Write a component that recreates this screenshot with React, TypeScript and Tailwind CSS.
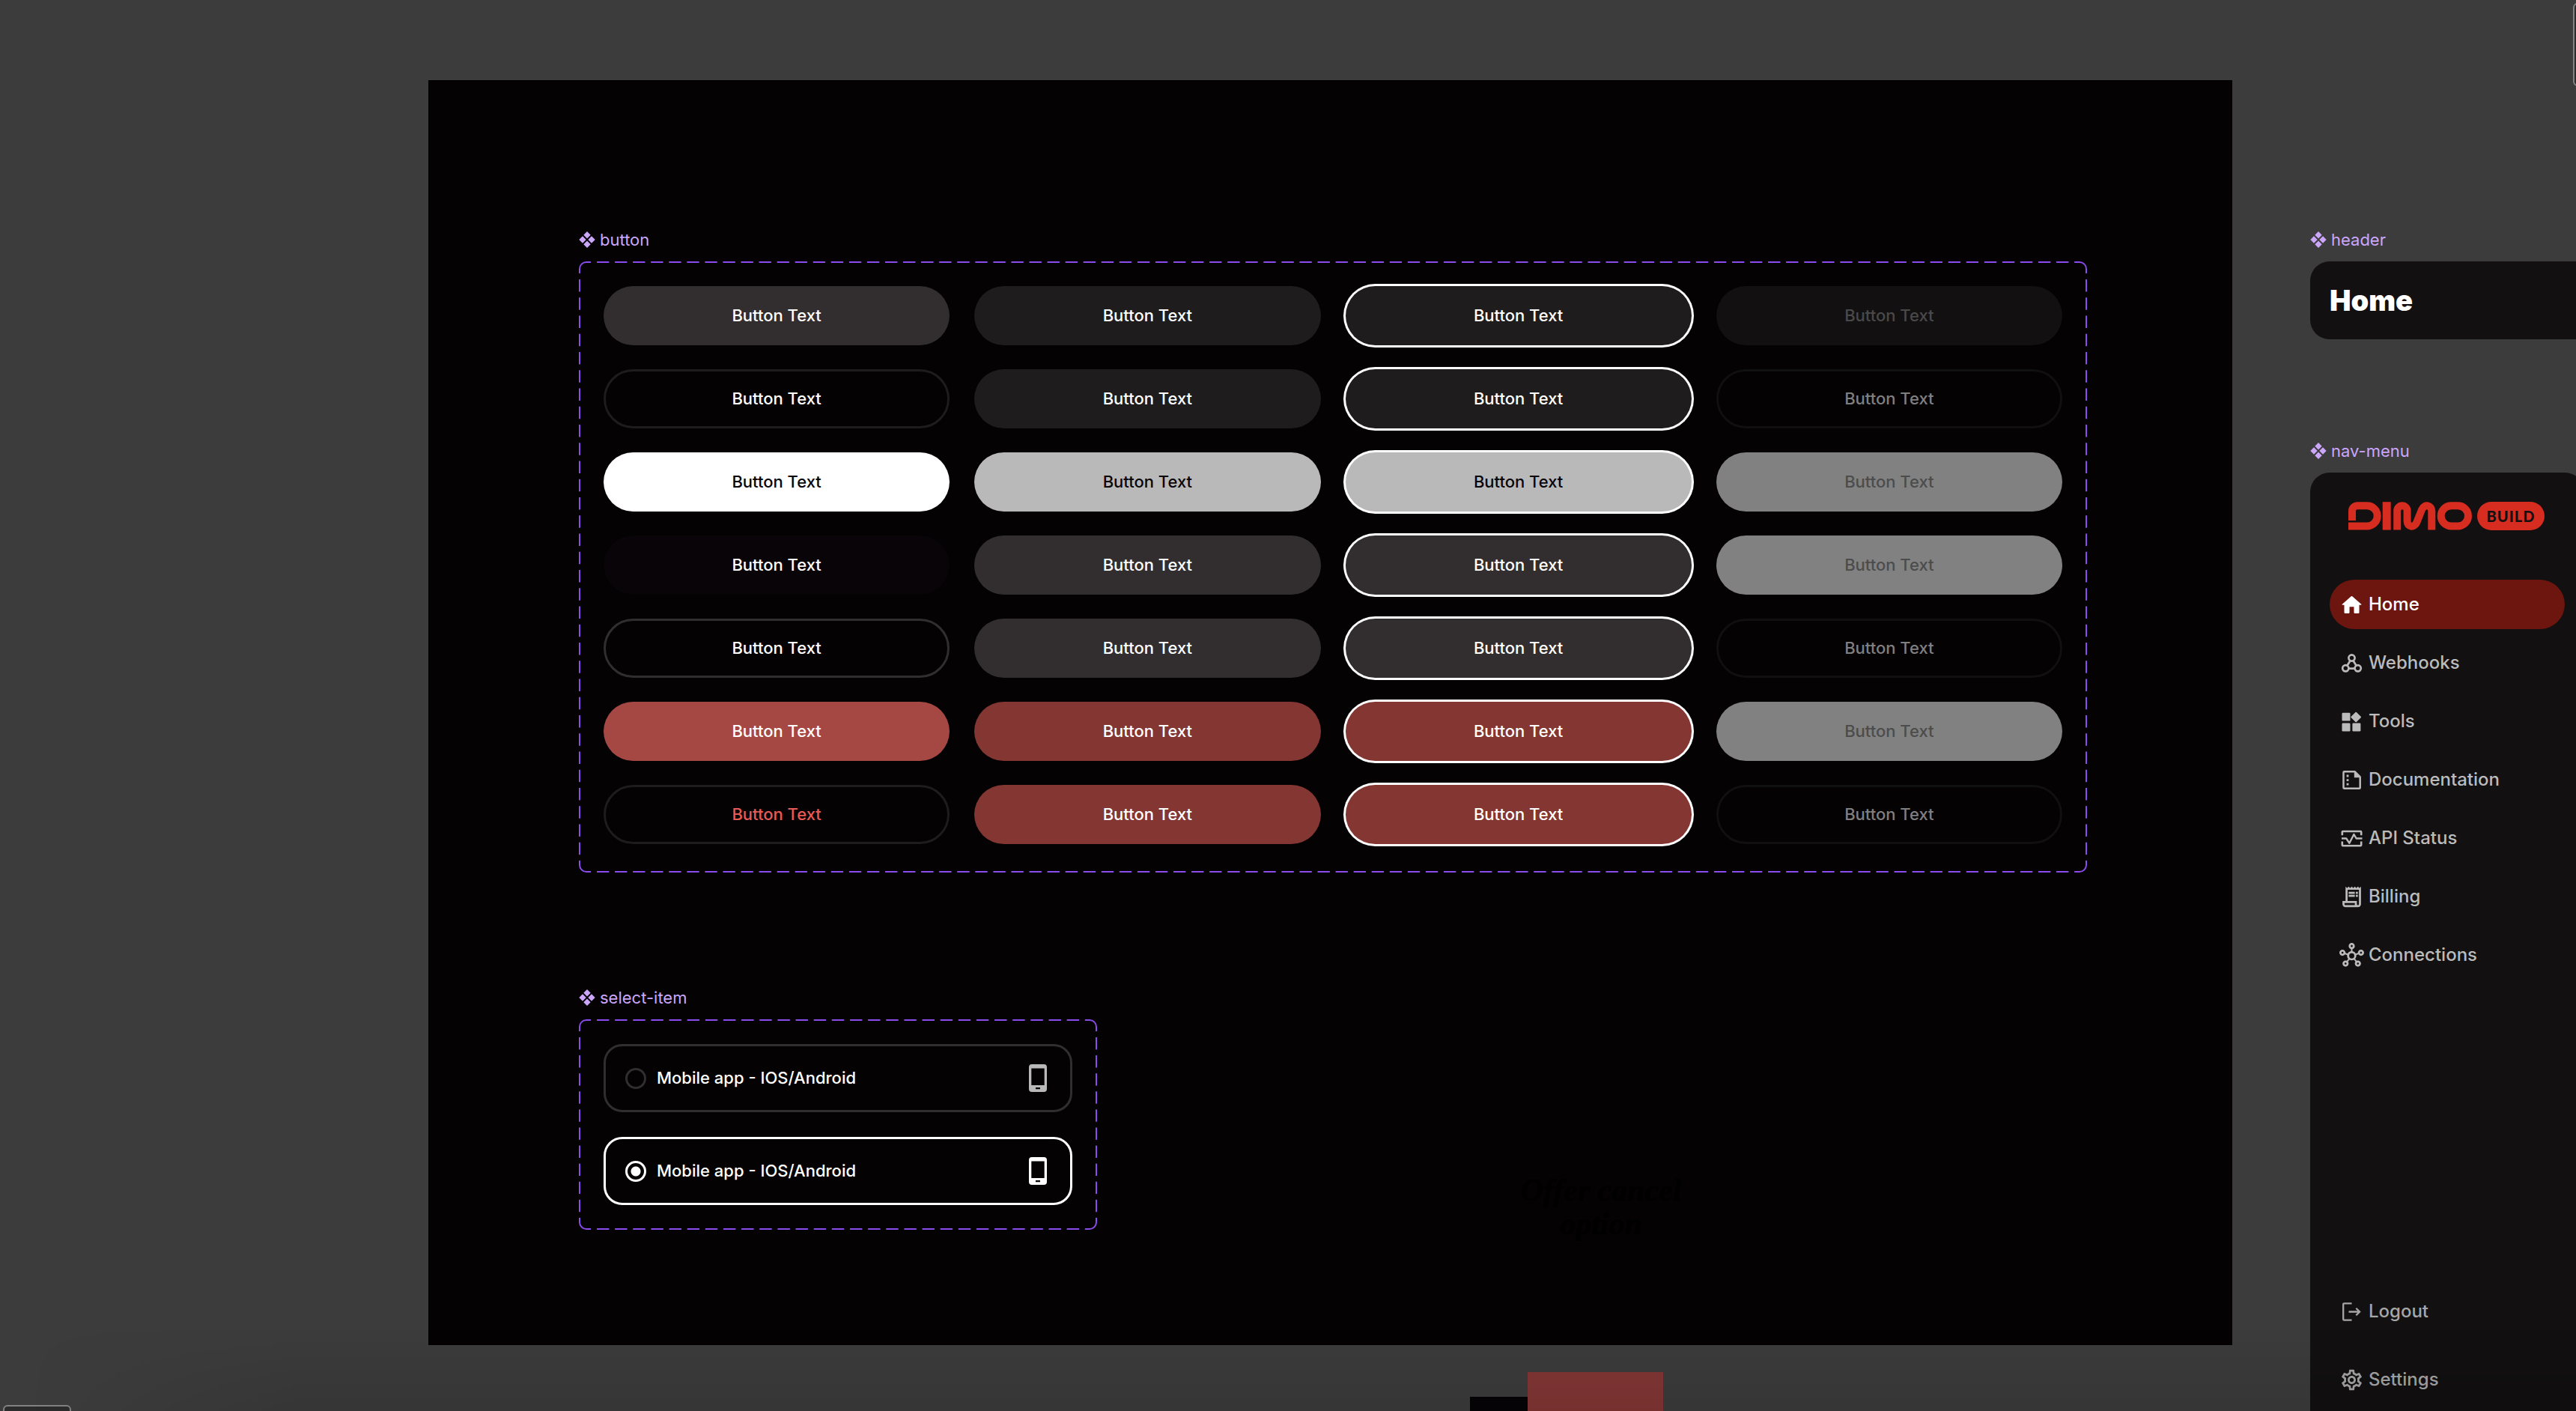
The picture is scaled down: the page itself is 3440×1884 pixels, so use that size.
import React, { useState } from "react";
import { clsx } from "clsx";
import { MdOutlineHub, MdOutlineReceiptLong, MdOutlineSettings } from "react-icons/md";

const disabledSolid = "bg-[#818181] text-[#4c4c4c]";
const disabledOutline = "border-3 border-[#111011] text-[#807f80]";

// one entry per variant: default, hover, focus, disabled
const buttonRows = [
  [
    "bg-[#322e2f] text-white",
    "bg-[#1e1c1d] text-white",
    "bg-[#1e1c1d] text-white",
    "bg-[#121011] text-[#4a4949]",
  ],
  [
    "border-3 border-[#1e1c1d] text-white",
    "bg-[#1e1c1d] text-white",
    "bg-[#1e1c1d] text-white",
    disabledOutline,
  ],
  [
    "bg-white text-[#080408]",
    "bg-[#b9b9b9] text-[#080408]",
    "bg-[#b9b9b9] text-[#080408]",
    disabledSolid,
  ],
  [
    "bg-[#080407] text-white",
    "bg-[#322e2f] text-white",
    "bg-[#322e2f] text-white",
    disabledSolid,
  ],
  [
    "border-3 border-[#322e2f] text-white",
    "bg-[#322e2f] text-white",
    "bg-[#322e2f] text-white",
    disabledOutline,
  ],
  [
    "bg-[#a54844] text-white",
    "bg-[#833632] text-white",
    "bg-[#833632] text-white",
    disabledSolid,
  ],
  [
    "border-3 border-[#1e1c1d] text-[#e85b55]",
    "bg-[#833632] text-white",
    "bg-[#833632] text-white",
    disabledOutline,
  ],
];

type IconProps = { className?: string };

const HomeIcon = ({ className }: IconProps) => (
  <svg viewBox="0 0 33 33" className={className} fill="currentColor" aria-hidden="true">
    <path d="M16 5.1a.8.8 0 0 1 1 0l12.2 10.7a.6.6 0 0 1-.4 1h-2.3v10a1.2 1.2 0 0 1-1.2 1.2h-4.6a1.2 1.2 0 0 1-1.2-1.2v-7.6h-6v7.6a1.2 1.2 0 0 1-1.2 1.2H7.7a1.2 1.2 0 0 1-1.2-1.2v-10H4.2a.6.6 0 0 1-.4-1z" />
  </svg>
);

const WebhooksIcon = ({ className }: IconProps) => (
  <svg
    viewBox="0 0 33 33"
    className={className}
    fill="none"
    stroke="currentColor"
    strokeWidth="2.7"
    aria-hidden="true"
  >
    <circle cx="16.5" cy="9.5" r="4.1" />
    <circle cx="8.3" cy="23.3" r="4.1" />
    <circle cx="24.7" cy="23.3" r="4.1" />
    <path d="M14.6 13 10.4 19.8M18.4 13l4.2 6.8M12.4 23.7h8.2" />
  </svg>
);

const ToolsIcon = ({ className }: IconProps) => (
  <svg viewBox="0 0 33 33" className={className} fill="currentColor" aria-hidden="true">
    <rect x="3.5" y="4.8" width="11" height="10.8" rx="1.2" />
    <rect x="3.5" y="18.5" width="11" height="11" rx="1.2" />
    <rect x="17.4" y="18.5" width="11" height="11" rx="1.2" />
    <rect x="17.1" y="5.4" width="10.2" height="10.2" rx="1" transform="rotate(45 22.2 10.5)" />
  </svg>
);

const DocumentationIcon = ({ className }: IconProps) => (
  <svg viewBox="0 0 33 33" className={className} fill="none" stroke="currentColor" aria-hidden="true">
    <path
      d="M20.5 5.2H6.5a1 1 0 0 0-1 1v20.600a1 1 0 0 0 1 1h20.200a1 1 0 0 0 1-1V12.500z"
      strokeWidth="2.5"
      strokeLinejoin="round"
    />
    <path d="M19.8 4.5v8.700h8.700z" fill="currentColor" stroke="none" />
    <path d="M11 9.600v2.800M11 15.200V18M11 20.800v2.800" strokeWidth="2.8" />
  </svg>
);

const StatusIcon = ({ className }: IconProps) => (
  <svg
    viewBox="0 0 33 33"
    className={className}
    fill="none"
    stroke="currentColor"
    strokeWidth="2.6"
    strokeLinejoin="round"
    aria-hidden="true"
  >
    <path d="M3.8 12.3V8a1 1 0 0 1 1-1h23.400a1 1 0 0 1 1 1v4.300M3.800 20.500v4.700a1 1 0 0 0 1 1h23.400a1 1 0 0 0 1-1v-4.700" />
    <path d="M3 16.500h6.200l4.200 6.300 6-11.800 3.200 5.500H30.500" strokeWidth="2.4" />
  </svg>
);

const LogoutIcon = ({ className }: IconProps) => (
  <svg
    viewBox="0 0 33 33"
    className={className}
    fill="none"
    stroke="currentColor"
    strokeWidth="2.3"
    aria-hidden="true"
  >
    <path d="M16.500 5.300H6.400a1.200 1.200 0 0 0-1.200 1.200v20a1.200 1.200 0 0 0 1.200 1.200h10.100" />
    <path d="M12.500 16.500h14.500M22.300 11.700l4.800 4.800-4.800 4.800" />
  </svg>
);

const PhoneIcon = ({ className }: IconProps) => (
  <svg viewBox="0 0 24 37" className={className} fill="currentColor" aria-hidden="true">
    <path
      fillRule="evenodd"
      d="M4 0h16a4 4 0 0 1 4 4v29a4 4 0 0 1-4 4H4a4 4 0 0 1-4-4V4a4 4 0 0 1 4-4zM3.300 5.500V28h17.400V5.500zM9 31v2.200h6V31z"
    />
  </svg>
);

const navItems = [
  { label: "Home", Icon: HomeIcon },
  { label: "Webhooks", Icon: WebhooksIcon },
  { label: "Tools", Icon: ToolsIcon },
  { label: "Documentation", Icon: DocumentationIcon },
  { label: "API Status", Icon: StatusIcon },
  { label: "Billing", Icon: MdOutlineReceiptLong },
  { label: "Connections", Icon: MdOutlineHub },
];

const accountItems = [
  { label: "Logout", Icon: LogoutIcon },
  { label: "Settings", Icon: MdOutlineSettings },
];

const ComponentLabel = ({ children }: { children: React.ReactNode }) => (
  <h2 className="mb-4 flex h-[26px] items-center gap-1.5 text-[22px] leading-[26px] text-[#cba6fb]">
    <svg viewBox="0 0 22 22" className="size-[22px]" fill="currentColor" aria-hidden="true">
      <path d="M11 0l4.700 4.700L11 9.400 6.300 4.700zM5 6.300 9.700 11 5 15.700.3 11zM17 6.300l4.700 4.700-4.700 4.700-4.700-4.700zM11 12.600l4.700 4.700L11 22l-4.700-4.700z" />
    </svg>
    {children}
  </h2>
);

// Dashed outline of a component set: solid corners, dashes that are fitted to each side
const DashedFrame = () => (
  <div className="pointer-events-none absolute inset-0" aria-hidden="true">
    <span className="absolute top-0 left-0 size-4 rounded-tl-[10px] border-t-2 border-l-2 border-[#8a4cec]" />
    <span className="absolute top-0 right-0 size-4 rounded-tr-[10px] border-t-2 border-r-2 border-[#8a4cec]" />
    <span className="absolute bottom-0 left-0 size-4 rounded-bl-[10px] border-b-2 border-l-2 border-[#8a4cec]" />
    <span className="absolute right-0 bottom-0 size-4 rounded-br-[10px] border-r-2 border-b-2 border-[#8a4cec]" />
    <span className="absolute top-0 right-4 left-6 h-[2px] bg-[linear-gradient(90deg,#8a4cec_67%,transparent_67%)] bg-[length:24px_2px] bg-repeat-round" />
    <span className="absolute right-4 bottom-0 left-6 h-[2px] bg-[linear-gradient(90deg,#8a4cec_67%,transparent_67%)] bg-[length:24px_2px] bg-repeat-round" />
    <span className="absolute top-6 bottom-4 left-0 w-[2px] bg-[linear-gradient(#8a4cec_67%,transparent_67%)] bg-[length:2px_24px] bg-repeat-round" />
    <span className="absolute top-6 right-0 bottom-4 w-[2px] bg-[linear-gradient(#8a4cec_67%,transparent_67%)] bg-[length:2px_24px] bg-repeat-round" />
  </div>
);

const ButtonSet = () => (
  <section>
    <ComponentLabel>button</ComponentLabel>
    <div className="relative grid grid-cols-4 gap-x-[33px] gap-y-8 px-[33px] pt-[33px] pb-[38px]">
      <DashedFrame />
      {buttonRows.map((row, i) =>
        row.map((style, j) => (
          <button
            key={`${i}-${j}`}
            type="button"
            disabled={j === 3}
            className={clsx(
              "h-[79px] rounded-full text-[22px] font-medium",
              style,
              j === 2 && "ring-3 ring-white"
            )}
          >
            Button Text
          </button>
        ))
      )}
    </div>
  </section>
);

const SelectItemSet = () => {
  const [selected, setSelected] = useState(1);

  return (
    <section className="w-[692px]">
      <ComponentLabel>select-item</ComponentLabel>
      <div className="relative flex flex-col gap-[33px] p-[33px]">
        <DashedFrame />
        {[0, 1].map((id) => (
          <label
            key={id}
            className={clsx(
              "flex h-[91px] items-center gap-3.5 rounded-[25px] border-3 pr-[31px] pl-[26px] text-[22px] font-medium text-white",
              selected === id ? "border-white" : "border-[#322e2f]"
            )}
          >
            <input
              type="radio"
              name="platform"
              checked={selected === id}
              onChange={() => setSelected(id)}
              className="size-7 shrink-0 appearance-none rounded-full border-3 border-[#322e2f] checked:border-white checked:bg-[radial-gradient(circle,white_6px,transparent_7px)]"
            />
            Mobile app - IOS/Android
            <PhoneIcon
              className={clsx("ml-auto h-[37px] w-6", selected === id ? "text-white" : "text-[#b9b9b9]")}
            />
          </label>
        ))}
      </div>
    </section>
  );
};

const Logo = () => (
  <div className="ml-[25px] flex items-center gap-[7px]">
    <svg
      viewBox="0 0 165 38"
      className="h-[38px] w-[165px]"
      fill="none"
      stroke="#d72c20"
      strokeWidth="10"
      role="img"
      aria-label="DIMO"
    >
      <path d="M0 32.600H25a13.700 13.700 0 0 0 0-27.400H12a7 7 0 0 0-7 7V25" />
      <path d="M51.200 0.200v37.400" strokeWidth="11" />
      <path d="M65.200 37.600V12a6.700 6.700 0 0 1 13.400 0v14c0 8.400 9.800 8.800 12.600 1.600L98.300 10c3.400-7.400 13-5.600 13 2.500v25.100" />
      <rect x="123.700" y="5.200" width="36.300" height="27.400" rx="13.700" />
    </svg>
    <span className="flex h-[38px] w-[90px] items-center justify-center rounded-full bg-[#d72c20] font-[Lato,sans-serif] text-[20px] font-black tracking-wider text-[#121011]">
      BUILD
    </span>
  </div>
);

const NavMenu = () => (
  <section>
    <ComponentLabel>nav-menu</ComponentLabel>
    <nav
      aria-label="Main"
      className="flex h-[1280px] w-[366px] flex-col rounded-t-[26px] bg-[#121011] px-[26px] pt-[39px] text-[24px] font-medium text-[#bbbbbb]"
    >
      <Logo />
      <div className="mt-[66px] flex flex-col gap-3">
        {navItems.map(({ label, Icon }, i) => (
          <a
            key={label}
            href="#"
            className={clsx(
              "flex h-[66px] items-center gap-1.5 rounded-full pl-[13px]",
              i === 0 && "bg-[#6d1610] text-white"
            )}
          >
            <Icon className="size-[33px]" />
            {label}
          </a>
        ))}
      </div>
      <div className="mt-auto mb-9 flex flex-col gap-[25px] text-[#a6a6a6]">
        {accountItems.map(({ label, Icon }) => (
          <a key={label} href="#" className="flex h-[66px] items-center gap-1.5 pl-[13px]">
            <Icon className="size-[33px]" />
            {label}
          </a>
        ))}
      </div>
    </nav>
  </section>
);

const App = () => {
  return (
    <main className="relative h-screen w-full overflow-hidden bg-[#3c3c3c] font-[Inter,sans-serif]">
      <div className="grid grid-cols-[572fr_2409fr_459fr]">
        <div className="col-start-2 mt-[107px] self-start bg-[#040203] pt-[200px] pr-[194px] pb-[154px] pl-[201px]">
          <ButtonSet />
          <div className="mt-[154px] flex items-start">
            <SelectItemSet />
            <p className="mt-[248px] -mb-4 ml-[548px] w-[250px] text-center font-['Liberation_Serif',serif] text-[42px] leading-[45px] font-bold text-black italic">
              Offer cancel option
            </p>
          </div>
        </div>

        <div className="mt-[307px] min-w-0 pl-[104px]">
          <section>
            <ComponentLabel>header</ComponentLabel>
            <header className="flex h-[104px] items-center rounded-l-[26px] bg-[#121011] pl-[26px]">
              <h1 className="text-[38px] font-black text-white">Home</h1>
            </header>
          </section>
          <div className="mt-[136px]">
            <NavMenu />
          </div>
        </div>
      </div>

      {/* loose shapes on the canvas */}
      <div className="absolute top-[1832px] left-[2040px] h-16 w-[181px] bg-[#833735]" />
      <div className="absolute top-[1865px] left-[1963px] h-8 w-[77px] bg-[#070407]" />
      <div className="absolute top-1 -right-2 h-[111px] w-3 rounded-l-md border-2 border-[#828282] bg-[#2c2c2c]" />
      <div className="absolute -bottom-4 left-1 h-6 w-[91px] rounded-md border-2 border-[#828282] bg-[#2c2c2c]" />
      <div className="pointer-events-none absolute inset-x-0 bottom-0 h-[110px] bg-linear-to-t from-black/10 to-transparent [mask-image:linear-gradient(90deg,transparent_40px,black_400px)]" />
    </main>
  );
};

export default App;
